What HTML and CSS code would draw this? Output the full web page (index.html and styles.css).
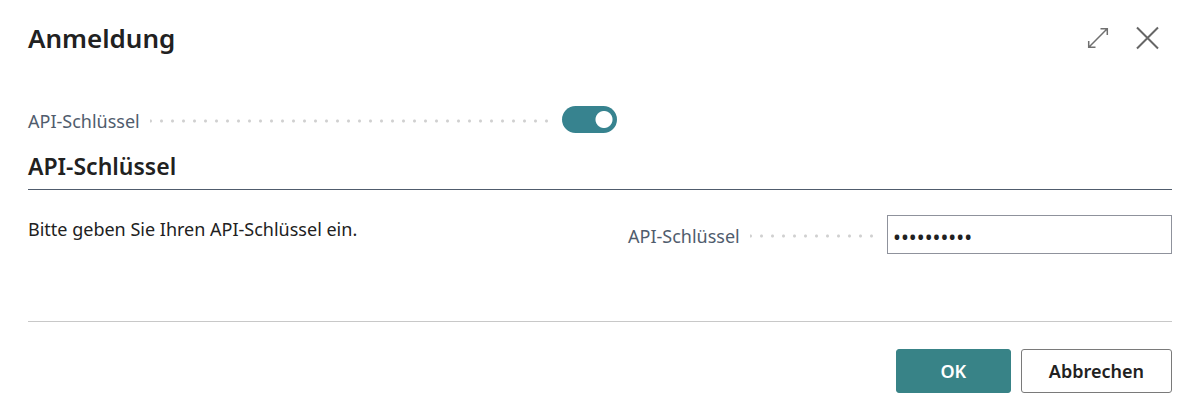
FILE: index.html
```html
<!DOCTYPE html>
<html lang="de">
<head>
  <meta charset="UTF-8">
  <title>Anmeldung</title>
  <meta name="viewport" content="width=device-width, initial-scale=1.0">
  <link rel="stylesheet" href="styles.css">
</head>
<body>
<form class="dialog">
  <header class="dialog-header">
    <h1>Anmeldung</h1>
    <div class="dialog-tools">
      <button type="button" class="icon-btn" aria-label="Vergrößern">
        <svg width="24" height="24" viewBox="0 0 24 24" fill="none" stroke="#707070" stroke-width="1.5">
          <path d="M2.8 21.2L21.2 2.8M14.5 2.7h6.8V9M9.5 21.3H2.7V15"/>
        </svg>
      </button>
      <button type="button" class="icon-btn" aria-label="Schließen">
        <svg width="24" height="24" viewBox="0 0 24 24" fill="none" stroke="#666" stroke-width="2">
          <path d="M1 1.5l21 21M22 1.5l-21 21"/>
        </svg>
      </button>
    </div>
  </header>

  <div class="field">
    <label class="caption" for="useKey">API-Schlüssel</label>
    <input type="checkbox" class="toggle" id="useKey" checked>
  </div>

  <h2>API-Schlüssel</h2>
  <div class="columns">
    <p>Bitte geben Sie Ihren API-Schlüssel ein.</p>
    <div class="field">
      <label class="caption" for="apiKey">API-Schlüssel</label>
      <input type="password" class="textbox" id="apiKey" value="0123456789">
    </div>
  </div>

  <footer class="dialog-footer">
    <button type="submit" class="btn btn-primary">OK</button>
    <button type="button" class="btn">Abbrechen</button>
  </footer>
</form>
</body>
</html>
```

FILE: styles.css
```css
* {
  box-sizing: border-box;
}
body {
  margin: 0;
  background: #fff;
  color: #212121;
  font-family: 'Segoe UI', 'Noto Sans', 'Open Sans', sans-serif;
  font-size: 18px;
  line-height: 24px;
}
h1, h2, p {
  margin: 0;
}
.dialog {
  padding: 20px 27px 20px 28px;
}
.dialog-header {
  display: flex;
  align-items: center;
  justify-content: space-between;
  height: 36px;
  margin-bottom: 44px;
}
h1 {
  font-size: 26px;
  font-weight: 600;
  line-height: 36px;
}
.dialog-tools {
  display: flex;
  gap: 26px;
  padding-right: 12px;
}
.icon-btn {
  display: flex;
  padding: 0;
  border: none;
  background: none;
  cursor: pointer;
}

/* caption with dot leader on the left, control on the right */
.field {
  display: grid;
  grid-template-columns: 11fr 13fr;
  column-gap: 18px;
  align-items: center;
  height: 39px;
}
.caption {
  display: flex;
  gap: 10px;
  padding-top: 2px;
  color: #505c6d;
}
.caption::after {
  content: "";
  flex: 1;
  margin-right: -6px;
  background: radial-gradient(circle, #d0d0d0 1px, transparent 2px) -5px 0 / 11px 24px repeat-x;
}
.toggle {
  appearance: none;
  width: 55px;
  height: 27px;
  margin: 0;
  border-radius: 14px;
  background: radial-gradient(circle at 42px 50%, #fff 8px, #37838f 9px);
  cursor: pointer;
}
.textbox {
  width: 100%;
  height: 39px;
  padding: 4px 5px 0;
  border: 1px solid #8f929c;
  border-radius: 0;
  color: #212121;
  font: inherit;
  font-size: 21px;
}
h2 {
  padding: 9px 0 5px;
  border-bottom: 1px solid #505c6d;
  font-size: 23px;
  font-weight: 600;
  line-height: 36px;
}
.columns {
  display: grid;
  grid-template-columns: 1fr 1fr;
  column-gap: 56px;
  padding: 25px 0 67px;
}
.columns p {
  padding-top: 2px;
}
.dialog-footer {
  display: flex;
  justify-content: flex-end;
  gap: 10px;
  padding-top: 27px;
  border-top: 1px solid #c8c8c8;
}
.btn {
  min-width: 115px;
  height: 44px;
  padding: 0 27px;
  border: 1px solid #7a7a7a;
  border-radius: 3px;
  background: #fff;
  color: #212121;
  font: inherit;
  font-weight: 600;
  cursor: pointer;
}
.btn-primary {
  border-color: #388387;
  background: #388387;
  color: #fff;
}
```
